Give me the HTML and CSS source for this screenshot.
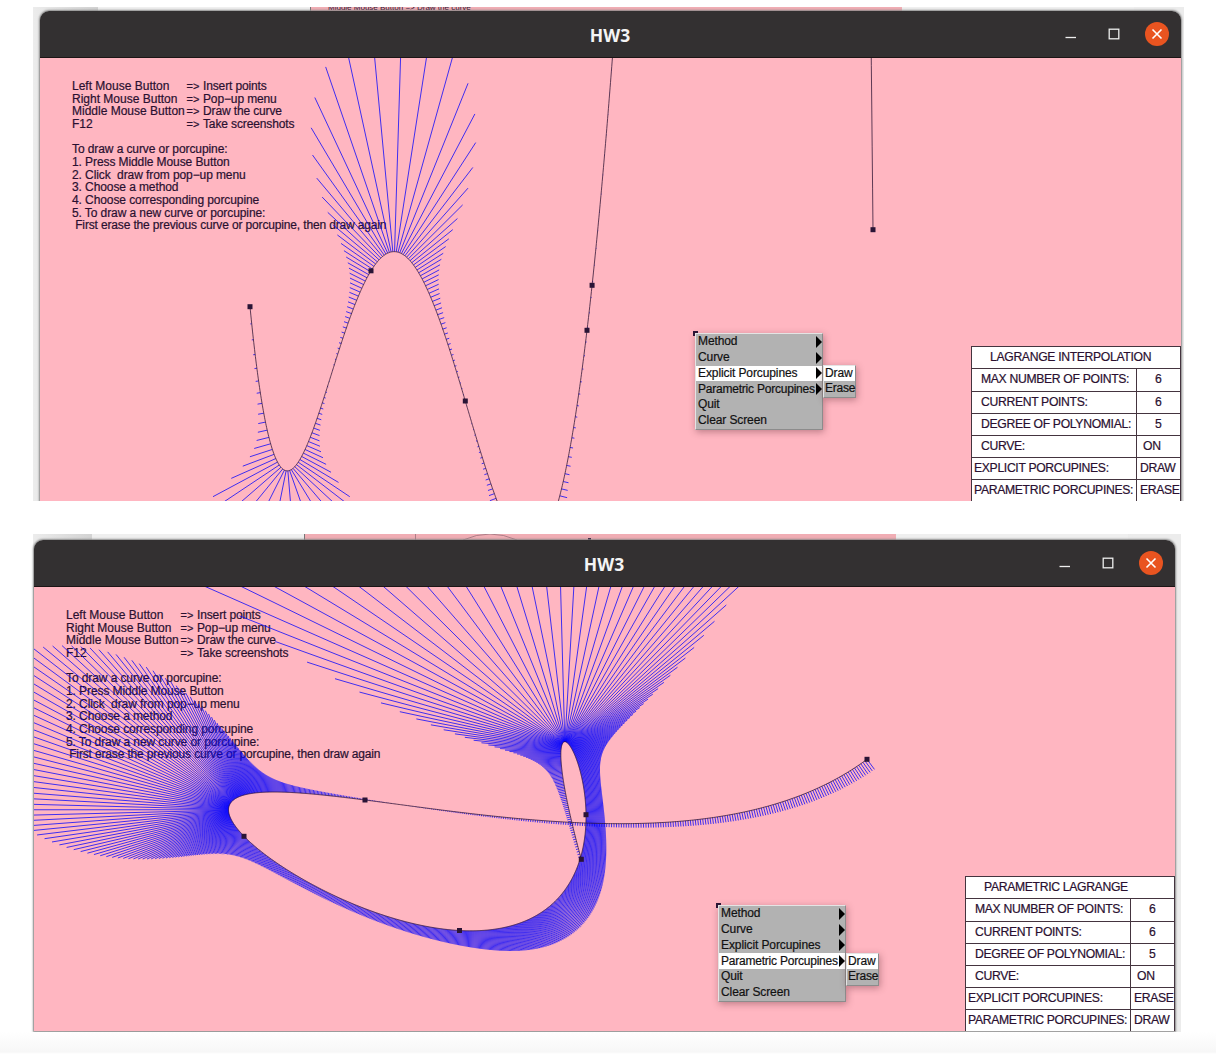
FILE: index.html
```html
<!DOCTYPE html>
<html lang="en">
<head>
<meta charset="utf-8">
<title>HW3</title>
<link rel="stylesheet" href="styles.css">
</head>
<body>
<main class="page">
  <section class="shot shot-explicit">
    <div class="behind"><div class="behind-window"><div class="behind-canvas"><span class="behind-text">Middle Mouse Button =&gt; Draw the curve</span></div></div></div>
    <div class="window">
      <header class="titlebar">
        <h1 class="title">HW3</h1>
        <div class="controls">
          <svg class="control" viewBox="0 0 24 24"><path d="M6.5 15.5h10.5" stroke="#eee" stroke-width="1.3"/></svg>
          <svg class="control" viewBox="0 0 24 24"><rect x="7.2" y="7.2" width="9.6" height="9.6" fill="none" stroke="#eee" stroke-width="1.3"/></svg>
          <svg class="control" viewBox="0 0 24 24"><circle cx="12" cy="12" r="12" fill="#e95420"/><path d="M7.5 7.5l9 9M16.5 7.5l-9 9" stroke="#fff" stroke-width="1.6"/></svg>
        </div>
      </header>
      <div class="canvas">
        <div class="help">
          <div class="key"><span>Left Mouse Button</span><span>=&gt;</span><span>Insert points</span></div>
          <div class="key"><span>Right Mouse Button</span><span>=&gt;</span><span>Pop−up menu</span></div>
          <div class="key"><span>Middle Mouse Button</span><span>=&gt;</span><span>Draw the curve</span></div>
          <div class="key"><span>F12</span><span>=&gt;</span><span>Take screenshots</span></div>
          <p class="steps">To draw a curve or porcupine:
1. Press Middle Mouse Button
2. Click  draw from pop−up menu
3. Choose a method
4. Choose corresponding porcupine
5. To draw a new curve or porcupine:
<span class="last"> First erase the previous curve or porcupine, then draw again</span></p>
        </div>
        <svg class="plot" id="explicit" viewBox="40 58 1141 443"></svg>
        <div class="menu menu-explicit">
          <div class="item has-sub">Method</div>
          <div class="item has-sub">Curve</div>
          <div class="item has-sub active">Explicit Porcupines</div>
          <div class="item has-sub tight">Parametric Porcupines</div>
          <div class="item">Quit</div>
          <div class="item">Clear Screen</div>
          <div class="menu submenu submenu-explicit">
            <div class="item active">Draw</div>
            <div class="item tight">Erase</div>
          </div>
        </div>
        <div class="status">
          <div class="status-title">LAGRANGE INTERPOLATION</div>
          <div class="row"><span>MAX NUMBER OF POINTS:</span><b class="num">6</b></div>
          <div class="row"><span>CURRENT POINTS:</span><b class="num">6</b></div>
          <div class="row"><span>DEGREE OF POLYNOMIAL:</span><b class="num">5</b></div>
          <div class="row"><span>CURVE:</span><b class="on">ON</b></div>
          <div class="row wide"><span>EXPLICIT PORCUPINES:</span><b>DRAW</b></div>
          <div class="row wide"><span>PARAMETRIC PORCUPINES:</span><b>ERASE</b></div>
        </div>
      </div>
    </div>
  </section>

  <section class="shot shot-parametric">
    <div class="behind"><div class="behind-window"><div class="behind-canvas">
      <svg width="591" height="7" viewBox="0 0 591 7"><path d="M110.5 0V7M158 6Q185 -6 212 6" fill="none" stroke="#8f6a74" stroke-width=".7"/><rect x="283" y="4" width="3" height="3" fill="#2a1436"/></svg>
    </div></div></div>
    <div class="window">
      <header class="titlebar">
        <h1 class="title">HW3</h1>
        <div class="controls">
          <svg class="control" viewBox="0 0 24 24"><path d="M6.5 15.5h10.5" stroke="#eee" stroke-width="1.3"/></svg>
          <svg class="control" viewBox="0 0 24 24"><rect x="7.2" y="7.2" width="9.6" height="9.6" fill="none" stroke="#eee" stroke-width="1.3"/></svg>
          <svg class="control" viewBox="0 0 24 24"><circle cx="12" cy="12" r="12" fill="#e95420"/><path d="M7.5 7.5l9 9M16.5 7.5l-9 9" stroke="#fff" stroke-width="1.6"/></svg>
        </div>
      </header>
      <div class="canvas">
        <div class="help">
          <div class="key"><span>Left Mouse Button</span><span>=&gt;</span><span>Insert points</span></div>
          <div class="key"><span>Right Mouse Button</span><span>=&gt;</span><span>Pop−up menu</span></div>
          <div class="key"><span>Middle Mouse Button</span><span>=&gt;</span><span>Draw the curve</span></div>
          <div class="key"><span>F12</span><span>=&gt;</span><span>Take screenshots</span></div>
          <p class="steps">To draw a curve or porcupine:
1. Press Middle Mouse Button
2. Click  draw from pop−up menu
3. Choose a method
4. Choose corresponding porcupine
5. To draw a new curve or porcupine:
<span class="last"> First erase the previous curve or porcupine, then draw again</span></p>
        </div>
        <svg class="plot" id="parametric" viewBox="34 587 1141 444"></svg>
        <div class="menu menu-parametric">
          <div class="item has-sub">Method</div>
          <div class="item has-sub">Curve</div>
          <div class="item has-sub">Explicit Porcupines</div>
          <div class="item has-sub tight active">Parametric Porcupines</div>
          <div class="item">Quit</div>
          <div class="item">Clear Screen</div>
          <div class="menu submenu submenu-parametric">
            <div class="item active">Draw</div>
            <div class="item tight">Erase</div>
          </div>
        </div>
        <div class="status">
          <div class="status-title">PARAMETRIC LAGRANGE</div>
          <div class="row"><span>MAX NUMBER OF POINTS:</span><b class="num">6</b></div>
          <div class="row"><span>CURRENT POINTS:</span><b class="num">6</b></div>
          <div class="row"><span>DEGREE OF POLYNOMIAL:</span><b class="num">5</b></div>
          <div class="row"><span>CURVE:</span><b class="on">ON</b></div>
          <div class="row wide"><span>EXPLICIT PORCUPINES:</span><b>ERASE</b></div>
          <div class="row wide"><span>PARAMETRIC PORCUPINES:</span><b>DRAW</b></div>
        </div>
      </div>
    </div>
  </section>
</main>
<script src="porcupine.js"></script>
</body>
</html>
```

FILE: styles.css
```css
* { box-sizing: border-box; }
body {
  margin: 0;
  background: #fff;
  font-family: "Liberation Sans", Arial, sans-serif;
  font-size: 12px;
  color: #2a1030;
}
.page {
  height: 1054px;
  padding: 7px 0 0 33px;
  display: flex;
  flex-direction: column;
  gap: 33px;
  overflow: hidden;
  background: linear-gradient(#fff 1032px, #f7f7f7 1052px, #fff 1054px);
}
.shot { position: relative; background: #dcdcdc; }
.shot-explicit { width: 1151px; height: 494px; padding: 4px 0 0 7px; }
.shot-parametric { width: 1148px; height: 498px; padding: 6px 0 0 1px; }

.behind {
  position: absolute;
  inset: 0;
  padding-left: 65px;
  background: linear-gradient(90deg, #ececec, #d0d0d0 65px, #ececec 1101px);
}
.shot-parametric .behind { padding-left: 59px; }
.behind-window { width: 1036px; height: 12px; background: #efefef; padding-left: 212px; }
.behind-canvas { width: 592px; height: 12px; background: #f0adb4; overflow: hidden; border-left: 1px solid #777; }
.behind-canvas svg { display: block; }
.behind-text { display: block; font-size: 8px; line-height: 8px; margin: -3px 0 0 17px; }

.window {
  position: relative;
  width: 1141px;
  height: 100%;
  display: flex;
  flex-direction: column;
  border-radius: 9px 9px 0 0;
  box-shadow: 0 0 2px 1px #888;
  clip-path: inset(-3px -3px 0 -3px);
}
.shot-parametric .window { height: 491px; clip-path: inset(-3px -3px -1px -3px); }
.titlebar {
  flex: none;
  height: 47px;
  display: grid;
  grid-template-columns: 1fr auto 1fr;
  align-items: center;
  padding: 0 12px 0 0;
  background: #333031;
  border-bottom: 1px solid #1c1515;
  border-radius: 9px 9px 0 0;
}
.title {
  grid-column: 2;
  margin: 1px -11px 0 0;
  font: bold 17.5px/24px "Noto Sans", "Open Sans", sans-serif;
  color: #f4f4f4;
}
.controls { display: flex; gap: 19px; justify-content: flex-end; }
.control { width: 24px; height: 24px; display: block; }

.canvas { position: relative; flex: 1; overflow: hidden; background: #ffb6c1; -webkit-text-stroke: .2px; }
.help { padding: 22px 0 0 32px; line-height: 12.65px; }
.key { display: grid; grid-template-columns: 114.5px 16.5px auto; white-space: nowrap; }
.key span:nth-child(2) { font-size: 11px; }
.key span:nth-child(3) { letter-spacing: -.13px; }
.steps { margin: 12.65px 0 0; white-space: pre; letter-spacing: -.09px; }
.last { letter-spacing: -.15px; }
.plot { position: absolute; inset: 0; width: 100%; height: 100%; }
.spines { fill: none; stroke: #0000ff; stroke-width: .75; }
.curve { fill: none; stroke: #2a1030; stroke-width: .75; }
.knot { fill: #2a1436; }

.menu {
  position: absolute;
  width: 128px;
  border: 1px solid;
  border-color: #e4e4e4 #8c8c8c #8c8c8c #e4e4e4;
  background: #b2b2b2;
  color: #111;
  letter-spacing: -.1px;
  box-shadow: 1px 2px 7px rgba(90, 40, 50, .4);
}
.menu-explicit { left: 655px; top: 275px; }
.menu-parametric { left: 684px; top: 318px; }
.submenu { width: 33px; left: 127px; }
.submenu-explicit { top: 30.5px; }
.submenu-parametric { top: 46.5px; }
.item {
  height: 15.8px;
  padding-left: 2px;
  line-height: 15.4px;
  white-space: nowrap;
  display: flex;
  justify-content: space-between;
  align-items: center;
}
.tight { letter-spacing: -.22px; }
.submenu .item { padding-left: 1px; }
.active { background: #fff; }
.has-sub::after {
  content: "";
  flex: none;
  border: 6px solid transparent;
  border-left-color: #000;
  border-right: 0;
}

.status {
  position: absolute;
  right: 0;
  bottom: -1px;
  width: 210px;
  background: #fff;
  border: 1px solid #44343f;
  font-size: 12.2px;
  letter-spacing: -.33px;
}
.status-title { height: 21.2px; line-height: 21px; padding-left: 18px; }
.row {
  height: 22.1px;
  line-height: 21.6px;
  display: grid;
  grid-template-columns: 165px 1fr;
  border-top: 1px solid #44343f;
  white-space: nowrap;
}
.row span { padding-left: 9px; border-right: 1px solid #44343f; }
.row.wide span { padding-left: 2px; }
.row b { font-weight: normal; padding-left: 3px; }
.row .num { padding-left: 18px; }
.row .on { padding-left: 6px; }
```

FILE: porcupine.js
```js
// Value and first two derivatives of the Lagrange interpolant, via Newton form.
function newton(ts, vs) {
  const c = vs.slice();
  for (let j = 1; j < ts.length; j++)
    for (let i = ts.length - 1; i >= j; i--)
      c[i] = (c[i] - c[i - 1]) / (ts[i] - ts[i - j]);
  return t => {
    let p = 0, d = 0, s = 0;
    for (let i = ts.length - 1; i >= 0; i--) {
      s = s * (t - ts[i]) + 2 * d;
      d = d * (t - ts[i]) + p;
      p = p * (t - ts[i]) + c[i];
    }
    return [p, d, s];
  };
}

function add(svg, tag, attrs) {
  const el = document.createElementNS("http://www.w3.org/2000/svg", tag);
  for (const k in attrs) el.setAttribute(k, attrs[k]);
  svg.appendChild(el);
}

// Each spine stands on the outer side of the curve, as long as the scaled curvature.
function draw(id, knots, ts, steps, scale, extra) {
  const svg = document.getElementById(id);
  const fx = newton(ts, knots.map(k => k[0]));
  const fy = newton(ts, knots.map(k => k[1]));
  const t0 = ts[0], t1 = ts[ts.length - 1];
  let spines = "", curve = "";
  for (let i = 0; i <= steps; i++) {
    const t = t0 + (t1 - t0) * i / steps;
    const [x, dx, ddx] = fx(t), [y, dy, ddy] = fy(t);
    const v = Math.hypot(dx, dy);
    const k = scale * (dx * ddy - dy * ddx) / (v * v * v);
    spines += `M${x.toFixed(2)} ${y.toFixed(2)}L${(x + k * dy / v).toFixed(2)} ${(y - k * dx / v).toFixed(2)}`;
  }
  for (let i = 0; i <= 1500; i++) {
    const t = t0 + (t1 - t0) * i / 1500;
    curve += `${i ? "L" : "M"}${fx(t)[0].toFixed(2)} ${fy(t)[0].toFixed(2)}`;
  }
  add(svg, "path", { class: "spines", d: spines });
  add(svg, "path", { class: "curve", d: curve });
  for (const [x, y] of knots.concat([extra]))
    add(svg, "rect", { class: "knot", x: x - 2.5, y: y - 2.5, width: 5, height: 5 });
}

const explicitKnots = [[250, 306.7], [371, 270.8], [465.3, 401], [587, 330.3], [592.08, 285.3], [873, 229.7]];
draw("explicit", explicitKnots, explicitKnots.map(k => k[0]), 362, 3200, [695.5, 333.5]);

const parametricKnots = [[581.3, 859.3], [586, 814.7], [459.5, 930.5], [244, 836.3], [365, 800], [867, 759.3]];
draw("parametric", parametricKnots, [0, 1, 2, 3, 4, 5], 1122, 3200, [718.5, 905.5]);
```
